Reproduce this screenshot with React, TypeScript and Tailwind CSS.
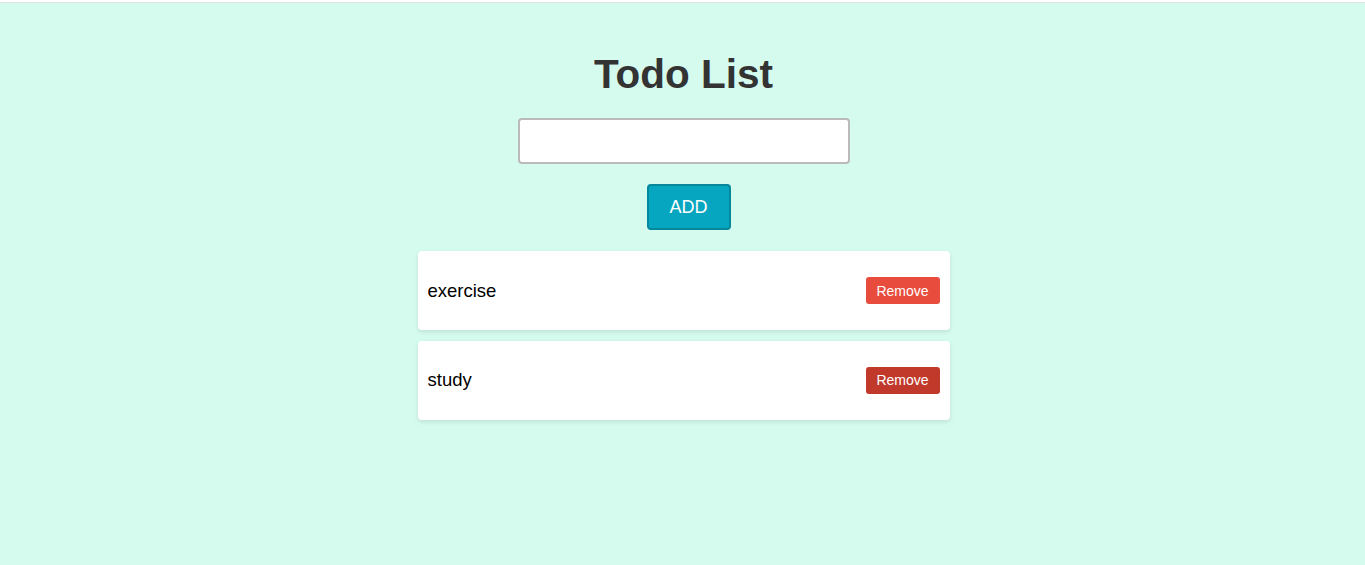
import { useState } from 'react'

type Todo = { id: number; text: string }

export default function App() {
  const [todos, setTodos] = useState<Todo[]>([
    { id: 1, text: 'exercise' },
    { id: 2, text: 'study' },
  ])
  const [value, setValue] = useState('')

  const add = () => {
    if (!value.trim()) return
    setTodos([...todos, { id: Date.now(), text: value.trim() }])
    setValue('')
  }

  return (
    <div className="min-h-[565px] bg-white pt-[2px] font-['Liberation_Sans',Arial,sans-serif]">
      <div className="flex min-h-[563px] flex-col items-center border-t border-t-[#e0e0e0] bg-[#d5fbee] pl-[2px]">
        <h1 className="mt-[28px] text-[40.5px] leading-[86px] font-bold text-[#333]">Todo List</h1>

        <input
          value={value}
          onChange={(e) => setValue(e.target.value)}
          className="mt-[1px] h-[46px] w-[332px] rounded-[4px] border-2 border-[#bbb] bg-white px-2 text-lg outline-none"
        />

        <button
          onClick={add}
          className="mt-[20px] ml-[10px] h-[46px] w-[84px] rounded-[4px] border-2 border-[#05879c] bg-[#06a6c0] text-lg text-white"
        >
          ADD
        </button>

        <ul className="mt-[21px] flex w-[532px] flex-col gap-[10.5px]">
          {todos.map((t, i) => (
            <li
              key={t.id}
              className="flex h-[79px] items-center justify-between rounded-[4px] bg-white px-[10px] shadow-[0_2px_4px_rgba(0,0,0,0.1)]"
            >
              <span className="text-[18.5px] text-black">{t.text}</span>
              <button
                onClick={() => setTodos(todos.filter((x) => x.id !== t.id))}
                className={
                  i === 1
                    ? 'h-[27px] w-[74px] rounded-[3px] bg-[#c0392b] text-sm text-white'
                    : 'h-[27px] w-[74px] rounded-[3px] bg-[#e74c3c] text-sm text-white'
                }
              >
                Remove
              </button>
            </li>
          ))}
        </ul>
      </div>
    </div>
  )
}
